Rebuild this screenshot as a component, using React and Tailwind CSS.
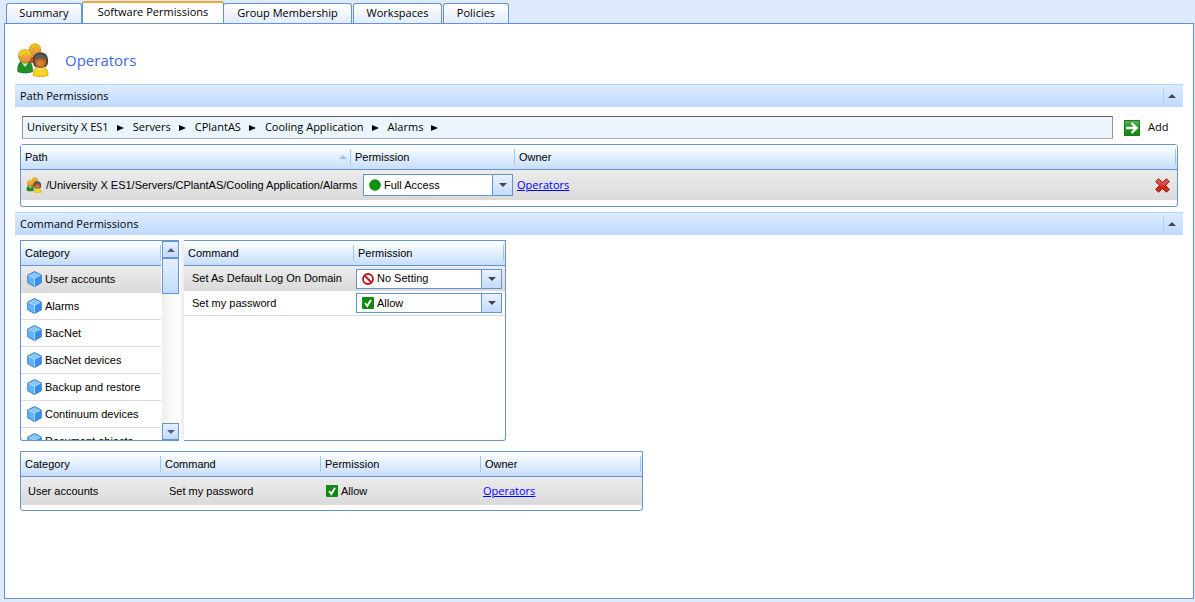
import { useState } from 'react';

const tabs = [
  { name: 'Summary', width: 'w-[76px]' },
  { name: 'Software Permissions', width: 'w-[142px]' },
  { name: 'Group Membership', width: 'w-[129px]' },
  { name: 'Workspaces', width: 'w-[89px]' },
  { name: 'Policies', width: 'w-[66px]' },
];

const crumbs = ['University X ES1', 'Servers', 'CPlantAS', 'Cooling Application', 'Alarms'];

const categories = [
  'User accounts',
  'Alarms',
  'BacNet',
  'BacNet devices',
  'Backup and restore',
  'Continuum devices',
  'Document objects',
];

const rowFill = 'bg-linear-to-b from-[#ececec] to-[#dadada]';
const headFill = 'bg-linear-to-b from-white to-[#c4dcfd]';

// Icons

const PeopleIcon = ({ className }) => (
  <svg viewBox="0 0 32 34" className={className} aria-hidden="true">
    <defs>
      <linearGradient id="skin" x1="0" y1="0" x2="0" y2="1">
        <stop offset="0" stopColor="#f9c06a" />
        <stop offset="1" stopColor="#dc8a28" />
      </linearGradient>
    </defs>
    <path d="M12 20c0-5 2-7 6-7s6 2 6 7z" fill="#e0441c" />
    <circle cx="18" cy="7.5" r="5.5" fill="url(#skin)" stroke="#a8651a" strokeWidth=".6" />
    <path d="M12.3 7C12 2.500 15 .8 18 .8s6 1.700 5.700 6.200C21 6 20 4.500 18.500 4.200 16.500 5.800 14.500 6.500 12.300 7z" fill="#f3c01b" stroke="#b98a10" strokeWidth=".5" />
    <path d="M.8 28.500c-.3-8 2.200-11 7.200-11s7.700 3 7.600 11c-4.600 2-10.200 2-14.800 0z" fill="#1f8f2c" stroke="#14691d" strokeWidth=".7" />
    <path d="M4.500 19.500L8 24l3.500-4.500z" fill="#d8ecd4" />
    <circle cx="8" cy="14" r="6.200" fill="url(#skin)" stroke="#a8651a" strokeWidth=".6" />
    <path d="M1.500 13.500C1 8.500 4.500 6.600 8 6.600s7 2 6.500 6.700c-2.700-.6-4.200-1.600-5.200-3-2 1.900-4.600 2.900-7.800 3.200z" fill="#f5ca1f" stroke="#b98a10" strokeWidth=".5" />
    <path d="M16.200 32.500c-.3-6 2.300-8.500 7.300-8.500s7.700 2.500 7.500 8.500c-4.500 1.500-10.300 1.500-14.800 0z" fill="#fbd21d" stroke="#b8920c" strokeWidth=".7" />
    <path d="M16 17.500c0-5.500 3.200-8.300 7.500-8.300s7.600 2.800 7.600 8.300c.3 3-.7 5-2.400 6.500H18.400c-1.700-1.500-2.700-3.500-2.400-6.500z" fill="#454342" />
    <ellipse cx="23.500" cy="18.800" rx="6" ry="6.400" fill="#b3621a" />
    <path d="M17.300 16.500c.6-3.600 3.200-5 6.200-5s5.600 1.400 6.200 5c-2.700 0-4.500-.6-6.200-1.500-1.700.9-3.500 1.500-6.200 1.500z" fill="#5f5c5a" />
    <ellipse cx="23.500" cy="20.200" rx="4" ry="3" fill="#cf8030" />
    <path d="M19.500 25.300c2 1.900 6 1.900 8 0z" fill="#eee6d0" />
  </svg>
);

const CubeIcon = () => (
  <svg viewBox="0 0 15 16" className="h-4 w-[15px] shrink-0" aria-hidden="true">
    <path d="M7.500.5l6.800 3.500v7.800l-6.800 3.800-6.800-3.800V4z" fill="#3d9bf5" />
    <path d="M7.500.7L14 4 7.500 7.200 1 4z" fill="#86c6ff" />
    <path d="M1 4l6.500 3.200v8L1 11.700z" fill="#62b2fd" />
    <path d="M14 4L7.500 7.200v8l6.500-3.500z" fill="#3490ee" />
    <path d="M7.500 15V7.200L1 4m6.500 3.200L14 4" fill="none" stroke="#c4e5ff" strokeWidth=".8" />
    <path d="M7.500.5l6.800 3.500v7.800l-6.800 3.800-6.800-3.800V4z" fill="none" stroke="#2e70b8" strokeWidth=".8" />
  </svg>
);

const AllowIcon = () => (
  <svg viewBox="0 0 12 12" className="size-3 shrink-0" aria-hidden="true">
    <rect width="12" height="12" rx="1" fill="#0c8a14" />
    <path d="M3 6l2.300 3L9 2.800" fill="none" stroke="#fff" strokeWidth="1.900" />
  </svg>
);

const NoSettingIcon = () => (
  <svg viewBox="0 0 12 12" className="size-3 shrink-0" aria-hidden="true">
    <circle cx="6" cy="6" r="5" fill="#fff" stroke="#c4101a" strokeWidth="1.800" />
    <path d="M2.500 2.500l7 7" stroke="#c4101a" strokeWidth="1.800" />
  </svg>
);

const FullAccessIcon = () => (
  <svg viewBox="0 0 12 12" className="size-3 shrink-0" aria-hidden="true">
    <circle cx="6" cy="6" r="5.800" fill="#0a930a" />
  </svg>
);

const AddIcon = () => (
  <svg viewBox="0 0 16 16" className="size-4 shrink-0" aria-hidden="true">
    <defs>
      <linearGradient id="addFill" x1="0" y1="0" x2="0" y2="1">
        <stop offset="0" stopColor="#56b356" />
        <stop offset=".5" stopColor="#1d9420" />
        <stop offset="1" stopColor="#0b8a0e" />
      </linearGradient>
    </defs>
    <rect x=".5" y=".5" width="15" height="15" fill="url(#addFill)" stroke="#1b7d1e" />
    <path d="M2 8h10M7.500 3L12.700 8l-5.200 5" fill="none" stroke="#fff" strokeWidth="2.300" />
  </svg>
);

const DeleteIcon = () => (
  <svg viewBox="0 0 15 15" className="size-[15px]" aria-hidden="true">
    <defs>
      <linearGradient id="delFill" x1="0" y1="0" x2="0" y2="1">
        <stop offset="0" stopColor="#dd6a5c" />
        <stop offset=".5" stopColor="#d4443a" />
        <stop offset=".55" stopColor="#d01f0c" />
        <stop offset="1" stopColor="#d8320f" />
      </linearGradient>
    </defs>
    <path
      d="M3.500.8L7.500 4.400 11.500.8l2.800 2.800-3.700 3.900 3.700 3.900-2.800 2.800-4-3.600-4 3.600-2.800-2.800 3.700-3.900L.7 3.600z"
      fill="url(#delFill)"
      stroke="#a3140c"
      strokeWidth="1"
      strokeLinejoin="round"
    />
  </svg>
);

const Up = ({ className }) => (
  <svg viewBox="0 0 8 4" className={className} aria-hidden="true">
    <path d="M4 0l4 4H0z" fill="currentColor" />
  </svg>
);

const Down = ({ className }) => (
  <svg viewBox="0 0 8 4" className={className} aria-hidden="true">
    <path d="M0 0h8L4 4z" fill="currentColor" />
  </svg>
);

// Section bar with the collapse arrow on the right
const SectionBar = ({ title, open, onToggle }) => (
  <div className="flex h-[23px] items-center justify-between border-t border-[#b3d6fb] bg-linear-to-b from-[#deebff] to-[#bedaff] pl-[5px]">
    <h2>{title}</h2>
    <button
      type="button"
      aria-label={`Toggle ${title}`}
      aria-expanded={open}
      onClick={onToggle}
      className="flex h-4 w-5 items-center justify-center border-l border-[#b3d0f5] pr-[3px] text-[#444]"
    >
      <Up className="h-1 w-2" />
    </button>
  </div>
);

const HeadCell = ({ children, sorted, last }) => (
  <th scope="col" className="border-b border-[#6593cf] p-0 text-left font-normal">
    <div
      className={`flex h-4 items-center justify-between pr-[3px] pl-1 ${last ? 'mr-px' : ''} border-r border-[#9cc8fd]`}
    >
      {children}
      {sorted && <Up className="h-1 w-2 text-[#92c1f8]" />}
    </div>
  </th>
);

const Picker = ({ label, icon, options, className }) => (
  <div className={`relative flex border border-[#6593cf] bg-white ${className}`}>
    <span className="pointer-events-none absolute inset-y-0 left-[5px] flex items-center">{icon}</span>
    <select aria-label={label} className="w-full appearance-none pl-5 outline-none">
      {options.map((o) => (
        <option key={o}>{o}</option>
      ))}
    </select>
    <span className="pointer-events-none absolute inset-y-0 right-0 flex w-5 items-center justify-center border-l border-[#6593cf] bg-linear-to-b from-[#eaf2ff] to-[#c3dbff] text-[#444]">
      <Down className="h-1 w-2" />
    </span>
  </div>
);

const OwnerLink = () => (
  <a href="#operators" className="font-['Open_Sans','Noto_Sans',sans-serif] text-[#0000ff] underline">
    Operators
  </a>
);

const scrollButton =
  'flex h-[17px] w-[17px] shrink-0 items-center justify-center border border-[#6593cf] bg-linear-to-b from-[#e6f0ff] to-[#c3dbff] text-[#4d6185]';

const tableBase = 'w-full table-fixed border-separate border-spacing-0';

export default function App() {
  const [tab, setTab] = useState('Software Permissions');
  const [selected, setSelected] = useState('User accounts');
  const [pathOpen, setPathOpen] = useState(true);
  const [commandOpen, setCommandOpen] = useState(true);

  return (
    <div className="flex min-h-screen flex-col bg-[#dfe9fc] pr-px pb-[3px] pl-1 font-['Open_Sans','Noto_Sans',sans-serif] text-[11px] text-black">
      <div role="tablist" className="flex h-[23px] items-end pl-0.5">
        {tabs.map((t) => {
          const active = t.name === tab;
          return (
            <button
              key={t.name}
              type="button"
              role="tab"
              aria-selected={active}
              onClick={() => setTab(t.name)}
              className={`rounded-t-[3px] border border-b-0 border-[#6593cf] whitespace-nowrap ${t.width} ${
                active
                  ? 'z-10 -mx-px h-[22px] border-t-2 border-t-[#f0a830] bg-white pb-[2px]'
                  : 'mr-px h-5 bg-linear-to-b from-white to-[#e1ecff]'
              }`}
            >
              {t.name}
            </button>
          );
        })}
      </div>

      <main className="flex-1 border border-[#6593cf] bg-white px-2.5">
        <div className="flex h-[60px] items-center gap-4 pt-3 pl-0.5">
          <PeopleIcon className="h-[34px] w-8" />
          <h1 className="text-[15px] text-[#4169e1]">Operators</h1>
        </div>

        <SectionBar title="Path Permissions" open={pathOpen} onToggle={() => setPathOpen(!pathOpen)} />
        {pathOpen && (
          <div className="px-[5px] pt-[9px] pb-[5px]">
            <div className="flex items-center pl-0.5">
              <nav
                aria-label="Path"
                className="flex h-[23px] flex-1 items-center gap-[9px] border border-t-[#5c6066] border-r-[#8d98a5] border-b-[#a5b0bd] border-l-[#8d98a5] bg-[#edf5fc] px-1"
              >
                {crumbs.map((c) => (
                  <span key={c} className="flex items-center gap-2">
                    <button type="button">{c}</button>
                    <svg viewBox="0 0 7 6" className="h-1.5 w-[7px]" aria-hidden="true">
                      <path d="M0 0l7 3-7 3z" />
                    </svg>
                  </span>
                ))}
              </nav>
              <button type="button" className="ml-[11px] flex w-[54px] items-center gap-2">
                <AddIcon />
                Add
              </button>
            </div>

            <div className="mt-[5px] rounded-[3px] border border-[#6593cf] pb-1.5 font-['Liberation_Sans',Arial,sans-serif]">
              <table className={tableBase}>
                <colgroup>
                  <col className="w-[330px]" />
                  <col className="w-[164px]" />
                  <col />
                </colgroup>
                <thead>
                  <tr className={`h-[25px] ${headFill}`}>
                    <HeadCell sorted>Path</HeadCell>
                    <HeadCell>Permission</HeadCell>
                    <HeadCell last>Owner</HeadCell>
                  </tr>
                </thead>
                <tbody>
                  <tr className={`h-[30px] ${rowFill}`}>
                    <td className="p-0 pl-[5px] whitespace-nowrap">
                      <div className="flex items-center gap-1">
                        <PeopleIcon className="h-4 w-4 shrink-0" />
                        /University X ES1/Servers/CPlantAS/Cooling Application/Alarms
                      </div>
                    </td>
                    <td className="p-0 pl-3">
                      <Picker
                        label="Path permission"
                        icon={<FullAccessIcon />}
                        options={['Full Access', 'Read Only', 'No Access']}
                        className="h-[22px] w-[150px]"
                      />
                    </td>
                    <td className="p-0 pr-[7px] pl-0.5">
                      <div className="flex items-center justify-between">
                        <OwnerLink />
                        <button type="button" aria-label="Remove path">
                          <DeleteIcon />
                        </button>
                      </div>
                    </td>
                  </tr>
                </tbody>
              </table>
            </div>
          </div>
        )}

        <SectionBar title="Command Permissions" open={commandOpen} onToggle={() => setCommandOpen(!commandOpen)} />
        {commandOpen && (
          <div className="px-[5px] pt-[5px] font-['Liberation_Sans',Arial,sans-serif]">
            <div className="flex h-[201px]">
              {/* Category list with its scroll bar */}
              <div className="flex w-[159px] rounded-bl-[3px] border-y border-l border-[#6593cf]">
                <div className="flex flex-1 flex-col overflow-hidden">
                  <div className={`flex h-[25px] shrink-0 items-center border-b border-[#6593cf] ${headFill}`}>
                    <span className="flex h-4 flex-1 items-center border-r border-[#9cc8fd] pl-1">Category</span>
                  </div>
                  <ul>
                    {categories.map((c) => (
                      <li key={c} className={`h-[27px] border-b border-[#dcdcdc] ${c === selected ? rowFill : ''}`}>
                        <button
                          type="button"
                          onClick={() => setSelected(c)}
                          className="flex h-full w-full items-center gap-[3px] pl-1.5 text-left"
                        >
                          <CubeIcon />
                          {c}
                        </button>
                      </li>
                    ))}
                  </ul>
                </div>
                <div className="ml-px flex flex-col bg-linear-to-r from-[#efefea] to-white">
                  <button type="button" aria-label="Scroll up" className={scrollButton}>
                    <Up className="h-1 w-2" />
                  </button>
                  <div className="h-9 border border-[#6593cf] bg-linear-to-b from-[#e6f0ff] to-[#c3dbff]" />
                  <button type="button" aria-label="Scroll down" className={`mt-auto ${scrollButton}`}>
                    <Down className="h-1 w-2" />
                  </button>
                </div>
              </div>
              <div className="ml-0.5 w-[3px] bg-[#efefef]" />

              {/* Commands of the selected category */}
              <div className="w-[322px] rounded-br-[3px] border-y border-r border-[#6593cf]">
                <table className={tableBase}>
                  <colgroup>
                    <col className="w-[170px]" />
                    <col />
                  </colgroup>
                  <thead>
                    <tr className={`h-[25px] ${headFill}`}>
                      <HeadCell>Command</HeadCell>
                      <HeadCell last>Permission</HeadCell>
                    </tr>
                  </thead>
                  <tbody>
                    <tr className={`h-[25px] ${rowFill}`}>
                      <td className="p-0 pl-2">Set As Default Log On Domain</td>
                      <td className="p-0 pl-0.5">
                        <Picker
                          label="Set As Default Log On Domain permission"
                          icon={<NoSettingIcon />}
                          options={['No Setting', 'Allow', 'Deny']}
                          className="h-5 w-[146px]"
                        />
                      </td>
                    </tr>
                    <tr className="h-[25px]">
                      <td className="border-b border-[#dcdcdc] p-0 pl-2">Set my password</td>
                      <td className="border-b border-[#dcdcdc] p-0 pl-0.5">
                        <Picker
                          label="Set my password permission"
                          icon={<AllowIcon />}
                          options={['Allow', 'Deny', 'No Setting']}
                          className="h-5 w-[146px]"
                        />
                      </td>
                    </tr>
                  </tbody>
                </table>
              </div>
            </div>

            <div className="mt-2.5 w-[623px] rounded-b-[3px] border border-[#6593cf] pb-[5px]">
              <table className={tableBase}>
                <colgroup>
                  <col className="w-[140px]" />
                  <col className="w-40" />
                  <col className="w-40" />
                  <col />
                </colgroup>
                <thead>
                  <tr className={`h-[25px] ${headFill}`}>
                    <HeadCell>Category</HeadCell>
                    <HeadCell>Command</HeadCell>
                    <HeadCell>Permission</HeadCell>
                    <HeadCell last>Owner</HeadCell>
                  </tr>
                </thead>
                <tbody>
                  <tr className={`h-7 ${rowFill}`}>
                    <td className="p-0 pl-[7px]">User accounts</td>
                    <td className="p-0 pl-2">Set my password</td>
                    <td className="p-0 pl-[5px]">
                      <span className="flex items-center gap-[3px]">
                        <AllowIcon />
                        Allow
                      </span>
                    </td>
                    <td className="p-0 pl-0.5">
                      <OwnerLink />
                    </td>
                  </tr>
                </tbody>
              </table>
            </div>
          </div>
        )}
      </main>
    </div>
  );
}
